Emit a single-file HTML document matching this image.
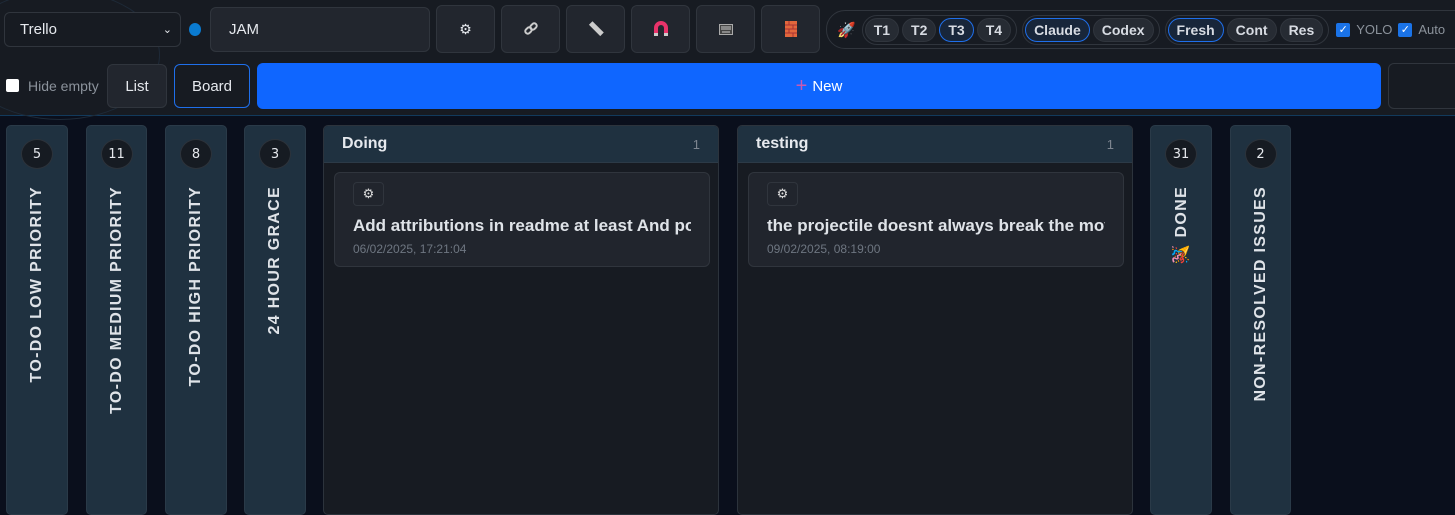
<!DOCTYPE html>
<html><head><meta charset="utf-8"><style>
*{box-sizing:border-box;margin:0;padding:0}
body{width:1455px;height:507px;overflow:hidden;background:#0a0f1c;font-family:"Liberation Sans",sans-serif;position:relative;color:#e6e9ee}
.a{position:absolute}
.hdr{left:0;top:0;width:1455px;height:116px;background:#171b22;border-bottom:1px solid #123a5c}
.btn{position:absolute;background:#22262e;border:1px solid #30353d;border-radius:6px;display:flex;align-items:center;justify-content:center;font-size:15px;color:#e6e9ee}
.pill{display:inline-flex;align-items:center;justify-content:center;height:24px;padding:0 8px;border-radius:12px;background:#262b33;border:1px solid #30353d;font-weight:bold;font-size:14px;color:#d7dbe2;margin-right:3px}
.pill.on{background:#18263a;border-color:#1f6feb}
.grp{display:inline-flex;align-items:center;border:1px solid #30353d;border-radius:15px;padding:2px 2px;height:30px;margin-right:5px}
.ncol{position:absolute;top:125px;height:390px;background:#1f3140;border:1px solid #2a3a48;border-radius:5px}
.badge{position:absolute;top:13px;left:50%;margin-left:-16px;width:32px;height:30px;border-radius:50%;background:#161b22;border:1px solid #2c323a;color:#e6e9ee;font-size:13px;display:flex;align-items:center;justify-content:center;font-family:"DejaVu Sans",sans-serif}
.vt{position:absolute;top:60px;left:0;width:100%;display:flex;justify-content:center}
.vt span{writing-mode:vertical-rl;transform:rotate(180deg);font-weight:bold;font-size:16px;letter-spacing:1.3px;color:#dfe3e8}
.col{position:absolute;top:125px;width:396px;height:390px;background:#171b22;border:1px solid #2c333c;border-radius:5px;overflow:hidden}
.ch{height:37px;background:#1f3140;border-bottom:1px solid #2c3a47;display:flex;align-items:center;justify-content:space-between;padding:0 18px}
.ch b{font-size:16px;color:#e6e9ee}
.ch i{font-style:normal;font-size:13px;color:#7d8590}
.card{position:absolute;left:10px;top:46px;width:376px;height:95px;background:#21252d;border:1px solid #30353d;border-radius:6px;overflow:hidden}
.gear{position:absolute;left:18px;top:9px;width:31px;height:24px;border:1px solid #30353d;border-radius:4px;font-size:13px;display:flex;align-items:center;justify-content:center;color:#ddd}
.ct{position:absolute;left:18px;top:43px;width:338px;white-space:nowrap;overflow:hidden;font-size:17px;font-weight:bold;color:#dfe3e8}
.cd{position:absolute;left:18px;top:69px;font-size:12px;color:#6e7681}
.cb{display:inline-block;width:14px;height:14px;background:#1a73e8;border-radius:2px;color:#fff;font-size:11px;line-height:14px;text-align:center}
</style></head><body>
<div class="a hdr"></div>
<div class="a" style="left:-40px;top:-10px;width:200px;height:130px;border-radius:50%;border:1px solid #1e2a38"></div>
<div class="btn" style="left:4px;top:12px;width:177px;height:35px;justify-content:space-between;padding:0 8px 0 15px;background:#171b22"><span>Trello</span><span style="font-size:11px">&#8964;</span></div>
<div class="a" style="left:189px;top:23px;width:12px;height:13px;border-radius:50%;background:#0a7bd1"></div>
<div class="btn" style="left:210px;top:7px;width:220px;height:45px;justify-content:flex-start;padding-left:18px">JAM</div>
<div class="btn" style="left:436px;top:5px;width:59px;height:48px;font-size:14px">⚙</div>
<div class="btn" style="left:501px;top:5px;width:59px;height:48px"><svg width="16" height="16" viewBox="0 0 16 16"><g fill="none" stroke="#ccc" stroke-width="2"><rect x="2" y="7" width="7" height="5" rx="2.5" transform="rotate(-45 5.5 9.5)"/><rect x="7" y="3" width="7" height="5" rx="2.5" transform="rotate(-45 10.5 5.5)"/></g></svg></div>
<div class="btn" style="left:566px;top:5px;width:59px;height:48px"><svg width="16" height="16"><rect x="6" y="0" width="5" height="16" fill="#ccc" transform="rotate(-45 8 8)"/></svg></div>
<div class="btn" style="left:631px;top:5px;width:59px;height:48px"><svg width="16" height="16"><path d="M3 15V7a5 5 0 0 1 10 0v8" fill="none" stroke="#e8336a" stroke-width="4"/><rect x="1" y="12" width="4" height="3" fill="#ccc"/><rect x="11" y="12" width="4" height="3" fill="#ccc"/></svg></div>
<div class="btn" style="left:696px;top:5px;width:59px;height:48px"><svg width="14" height="11"><rect width="14" height="11" fill="#aaa"/><rect x="1" y="1" width="12" height="9" fill="#444"/><path d="M2 3h10M2 5h10M3 8h8" stroke="#ccc"/></svg></div>
<div class="btn" style="left:761px;top:5px;width:59px;height:48px"><svg width="12" height="16"><rect width="12" height="16" fill="#e2673c"/><path d="M0 4h12M0 8h12M0 12h12M4 0v4M8 4v4M4 8v4M8 12v4" stroke="#a33" stroke-width="1"/></svg></div>
<div class="a" style="left:826px;top:10px;width:660px;height:39px;border:1px solid #30353d;border-radius:19px;display:flex;align-items:center;padding-left:10px">
<span style="font-size:15px;margin-right:6px">🚀</span>
<span class="grp"><span class="pill">T1</span><span class="pill">T2</span><span class="pill on">T3</span><span class="pill">T4</span></span>
<span class="grp"><span class="pill on">Claude</span><span class="pill">Codex</span></span>
<span class="grp"><span class="pill on">Fresh</span><span class="pill">Cont</span><span class="pill">Res</span></span>
<span class="cb" style="margin:0 6px 0 2px">✓</span><span style="font-size:13px;color:#8b929b;margin-right:6px">YOLO</span>
<span class="cb" style="margin-right:6px">✓</span><span style="font-size:13px;color:#8b929b">Auto</span>
</div>
<div class="a" style="left:6px;top:79px;width:13px;height:13px;background:#fff;border-radius:2px"></div>
<div class="a" style="left:28px;top:78px;font-size:14px;color:#8b929b">Hide empty</div>
<div class="btn" style="left:107px;top:64px;width:60px;height:44px">List</div>
<div class="btn" style="left:174px;top:64px;width:76px;height:44px;border-color:#1f6feb;background:#171b22">Board</div>
<div class="a" style="left:257px;top:63px;width:1124px;height:46px;background:#0f66ff;border-radius:6px;display:flex;align-items:center;justify-content:center;font-size:15px;color:#fff"><span style="color:#c85ab0;font-size:20px;margin-right:5px;line-height:1">+</span>New</div>
<div class="btn" style="left:1388px;top:63px;width:80px;height:46px;background:#171b22"></div>

<div class="ncol" style="left:6px;width:62px"><div class="badge">5</div><div class="vt"><span>TO-DO LOW PRIORITY</span></div></div>
<div class="ncol" style="left:86px;width:61px"><div class="badge">11</div><div class="vt"><span>TO-DO MEDIUM PRIORITY</span></div></div>
<div class="ncol" style="left:165px;width:62px"><div class="badge">8</div><div class="vt"><span>TO-DO HIGH PRIORITY</span></div></div>
<div class="ncol" style="left:244px;width:62px"><div class="badge">3</div><div class="vt"><span>24 HOUR GRACE</span></div></div>

<div class="col" style="left:323px"><div class="ch"><b>Doing</b><i>1</i></div>
<div class="card"><div class="gear">⚙</div><div class="ct">Add attributions in readme at least And potentially more</div><div class="cd">06/02/2025, 17:21:04</div></div></div>
<div class="col" style="left:737px"><div class="ch"><b>testing</b><i>1</i></div>
<div class="card"><div class="gear">⚙</div><div class="ct">the projectile doesnt always break the moving wall</div><div class="cd">09/02/2025, 08:19:00</div></div></div>

<div class="ncol" style="left:1150px;width:62px"><div class="badge">31</div><div class="vt"><span>🎉 DONE</span></div></div>
<div class="ncol" style="left:1230px;width:61px"><div class="badge">2</div><div class="vt"><span>NON-RESOLVED ISSUES</span></div></div>
</body></html>
